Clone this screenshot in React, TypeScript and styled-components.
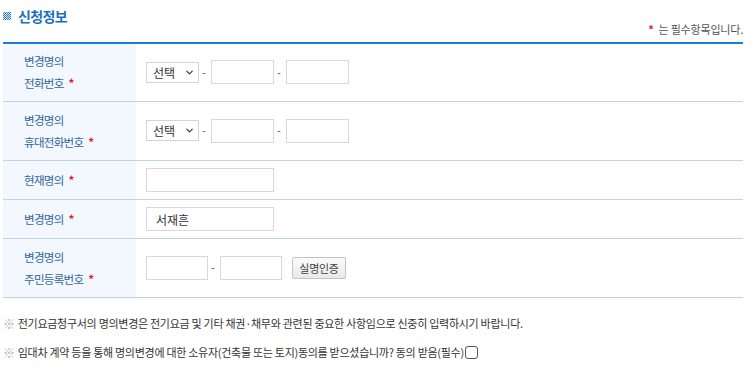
import React from 'react';
import styled, { createGlobalStyle } from 'styled-components';
import { ChevronDown } from 'lucide-react';

const GlobalStyle = createGlobalStyle`
  body {
    margin: 0;
    background: #fff;
    font-family: "Noto Sans CJK KR", "Noto Sans", sans-serif;
    color: #333;
  }
`;

const Page = styled.div`
  width: 740px;
  padding: 0 8px 0 3px;
`;

const TitleRow = styled.div`
  display: flex;
  align-items: center;
  gap: 7px;
  height: 32px;
`;

const TitleIcon = styled.span`
  width: 8px;
  height: 8px;
  background-image: repeating-conic-gradient(#3b7fc4 0 25%, #cfe0f2 0 50%);
  background-size: 2px 2px;
`;

const Title = styled.h2`
  margin: 0;
  font-size: 14px;
  font-weight: 700;
  color: #1b6fc2;
  letter-spacing: -0.6px;
`;

const RequiredNote = styled.div`
  display: flex;
  justify-content: flex-end;
  align-items: center;
  gap: 5px;
  height: 14px;
  margin: -10px 0 6px;
  font-size: 11px;
  color: #555;
  letter-spacing: -0.2px;
`;

const Star = styled.span`
  color: #e0202a;
  font-weight: 700;
  margin-left: 5px;
`;

const FormTable = styled.table`
  width: 740px;
  border-collapse: collapse;
  border-top: 2px solid #1a7fd0;
`;

const Row = styled.tr<{ $h: number }>`
  height: ${({ $h }) => $h}px;
  border-bottom: 1px solid #bcd5e8;
`;

const Head = styled.th`
  width: 112px;
  padding: 0 0 0 21px;
  background: #f2f8fe;
  text-align: left;
  font-size: 11.5px;
  font-weight: 400;
  line-height: 22px;
  letter-spacing: -0.7px;
  color: #33669a;
`;

const Cell = styled.td`
  padding: 0 10px;
`;

const Inline = styled.div`
  display: flex;
  align-items: center;
`;

const SelectBox = styled.div`
  position: relative;
  display: flex;
`;

const Select = styled.select`
  box-sizing: border-box;
  width: 53px;
  height: 21px;
  padding: 0 0 0 6px;
  border: 1px solid #d4d4d4;
  border-radius: 0;
  appearance: none;
  background: #fff;
  font-family: inherit;
  font-size: 12px;
  color: #333;
  outline: none;
`;

const Arrow = styled(ChevronDown)`
  position: absolute;
  right: 4px;
  top: 5px;
  pointer-events: none;
  color: #333;
`;

const Input = styled.input<{ $w: number }>`
  box-sizing: border-box;
  width: ${({ $w }) => $w}px;
  height: 24px;
  padding: 0 9px;
  border: 1px solid #d8d8d8;
  font-family: inherit;
  font-size: 12px;
  color: #333;
  outline: none;
`;

const Dash = styled.span`
  width: 4px;
  margin: 0 5px 0 3px;
  font-size: 11px;
  line-height: 11px;
  color: #555;
`;

const Button = styled.button`
  margin-left: 10px;
  height: 22px;
  width: 54px;
  padding: 0;
  border: 1px solid #c4c4c4;
  border-radius: 2px;
  background: linear-gradient(#fbfbfb, #e9e9e9);
  font-family: inherit;
  font-size: 11px;
  letter-spacing: -0.3px;
  color: #444;
`;

const Notes = styled.div`
  display: flex;
  flex-direction: column;
  gap: 10px;
  padding-top: 16px;
`;

const Note = styled.p`
  display: flex;
  align-items: center;
  margin: 0;
  font-size: 11px;
  line-height: 19px;
  letter-spacing: -0.28px;
  color: #333;
`;

const Mark = styled.span`
  color: #aaa;
  margin-right: 3px;
  font-size: 12px;
  font-weight: 300;
`;

const Check = styled.input`
  width: 13px;
  height: 13px;
  margin: 0 0 0 1px;
  appearance: none;
  border: 1px solid #555;
  border-radius: 3px;
  background: #fff;
`;

const PhoneRow = () => (
  <Inline>
    <SelectBox>
      <Select defaultValue="">
        <option value="">선택</option>
      </Select>
      <Arrow size={11} strokeWidth={2.5} />
    </SelectBox>
    <Dash>-</Dash>
    <Input $w={63} />
    <Dash>-</Dash>
    <Input $w={63} />
  </Inline>
);

export default function App() {
  return (
    <Page>
      <GlobalStyle />
      <TitleRow>
        <TitleIcon />
        <Title>신청정보</Title>
      </TitleRow>
      <RequiredNote>
        <Star>*</Star>
        <span>는 필수항목입니다.</span>
      </RequiredNote>
      <FormTable>
        <tbody>
          <Row $h={58}>
            <Head>변경명의<br />전화번호<Star>*</Star></Head>
            <Cell><PhoneRow /></Cell>
          </Row>
          <Row $h={59}>
            <Head>변경명의<br />휴대전화번호<Star>*</Star></Head>
            <Cell><PhoneRow /></Cell>
          </Row>
          <Row $h={39}>
            <Head>현재명의<Star>*</Star></Head>
            <Cell><Input $w={128} /></Cell>
          </Row>
          <Row $h={39}>
            <Head>변경명의<Star>*</Star></Head>
            <Cell><Input $w={128} defaultValue="서재흔" /></Cell>
          </Row>
          <Row $h={59}>
            <Head>변경명의<br />주민등록번호<Star>*</Star></Head>
            <Cell>
              <Inline>
                <Input $w={62} />
                <Dash>-</Dash>
                <Input $w={62} />
                <Button>실명인증</Button>
              </Inline>
            </Cell>
          </Row>
        </tbody>
      </FormTable>
      <Notes>
        <Note>
          <Mark>※</Mark>
          전기요금청구서의 명의변경은 전기요금 및 기타 채권·채무와 관련된 중요한 사항임으로 신중히 입력하시기 바랍니다.
        </Note>
        <Note>
          <Mark>※</Mark>
          임대차 계약 등을 통해 명의변경에 대한 소유자(건축물 또는 토지)동의를 받으셨습니까? 동의 받음(필수)
          <Check type="checkbox" />
        </Note>
      </Notes>
    </Page>
  );
}
